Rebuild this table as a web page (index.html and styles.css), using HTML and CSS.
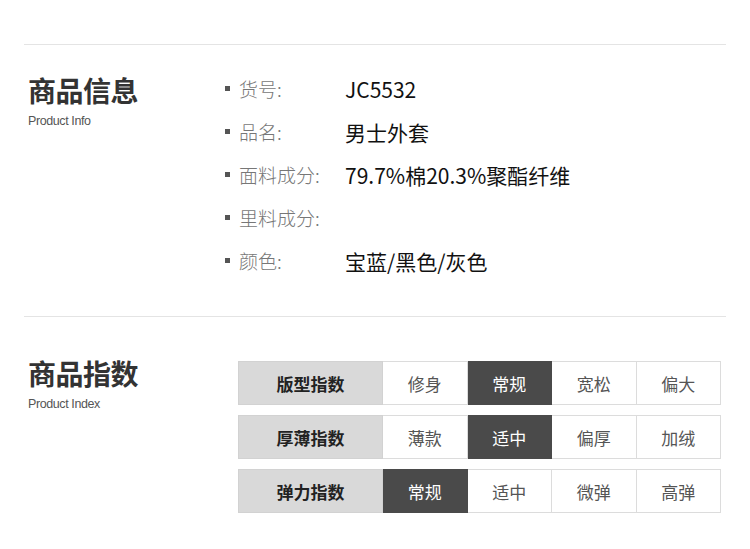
FILE: index.html
```html
<!DOCTYPE html>
<html lang="zh">
<head>
<meta charset="utf-8">
<title>商品信息</title>
<link rel="stylesheet" href="styles.css">
</head>
<body>
<div class="page">
  <section class="section info">
    <div class="title">
      <h2>商品信息</h2>
      <p>Product Info</p>
    </div>
    <ul class="specs">
      <li><span class="label">货号:</span><span class="value">JC5532</span></li>
      <li><span class="label">品名:</span><span class="value">男士外套</span></li>
      <li><span class="label">面料成分:</span><span class="value">79.7%棉20.3%聚酯纤维</span></li>
      <li><span class="label">里料成分:</span><span class="value"></span></li>
      <li><span class="label">颜色:</span><span class="value">宝蓝/黑色/灰色</span></li>
    </ul>
  </section>
  <section class="section index">
    <div class="title">
      <h2>商品指数</h2>
      <p>Product Index</p>
    </div>
    <div class="table">
      <div class="row">
        <div class="head">版型指数</div>
        <div class="cell">修身</div>
        <div class="cell on">常规</div>
        <div class="cell">宽松</div>
        <div class="cell">偏大</div>
      </div>
      <div class="row">
        <div class="head">厚薄指数</div>
        <div class="cell">薄款</div>
        <div class="cell on">适中</div>
        <div class="cell">偏厚</div>
        <div class="cell">加绒</div>
      </div>
      <div class="row">
        <div class="head">弹力指数</div>
        <div class="cell on">常规</div>
        <div class="cell">适中</div>
        <div class="cell">微弹</div>
        <div class="cell">高弹</div>
      </div>
    </div>
  </section>
</div>
</body>
</html>
```

FILE: styles.css
```css
* { box-sizing: border-box; }
html, body { margin: 0; padding: 0; background: #fff; }
body {
  font-family: "Noto Sans CJK SC", "Noto Sans", sans-serif;
  color: #222;
}
.page {
  padding: 44px 24px 0 24px;
}
.section {
  border-top: 1px solid #e4e4e4;
  display: flex;
}
.title {
  width: 199px;
  padding-left: 4px;
  flex: none;
}
.title h2 {
  margin: 0;
  font-size: 28px;
  line-height: 30px;
  font-weight: 700;
  color: #333;
  letter-spacing: -0.5px;
}
.title p {
  margin: 9px 0 0 0;
  font-family: "Liberation Sans", "DejaVu Sans", sans-serif;
  font-size: 12.5px;
  line-height: 14px;
  color: #555;
  letter-spacing: -0.4px;
}
.info {
  padding-top: 22px;
  padding-bottom: 34px;
}
.info .title { padding-top: 8px; }
.specs {
  list-style: none;
  margin: 0;
  padding: 0;
}
.specs li {
  display: flex;
  align-items: center;
  height: 43px;
}
.specs li::before {
  content: "";
  width: 5px;
  height: 5px;
  background: #555;
  margin-left: 2px;
  margin-right: 9px;
  flex: none;
}
.label {
  width: 106px;
  font-size: 19px;
  color: #777;
  font-weight: 300;
}
.value {
  font-size: 21px;
  color: #111;
}
.index {
  padding-top: 44px;
  padding-bottom: 20px;
}
.index .title { padding-top: 0; margin-top: -3px; }
.table {
  display: flex;
  flex-direction: column;
  gap: 10px;
  margin-left: 15px;
}
.row {
  display: flex;
  height: 44px;
}
.head {
  width: 145px;
  background: #d9d9d9;
  border: 1px solid #d2d2d2;
  display: flex;
  align-items: center;
  justify-content: center;
  font-size: 17px;
  font-weight: 700;
  color: #222;
}
.cell {
  width: 84.5px;
  border: 1px solid #dcdcdc;
  border-left: none;
  display: flex;
  align-items: center;
  justify-content: center;
  font-size: 17px;
  color: #555;
  background: #fff;
}
.cell.on {
  background: #4a4a4a;
  border-color: #4a4a4a;
  color: #fff;
}
```
